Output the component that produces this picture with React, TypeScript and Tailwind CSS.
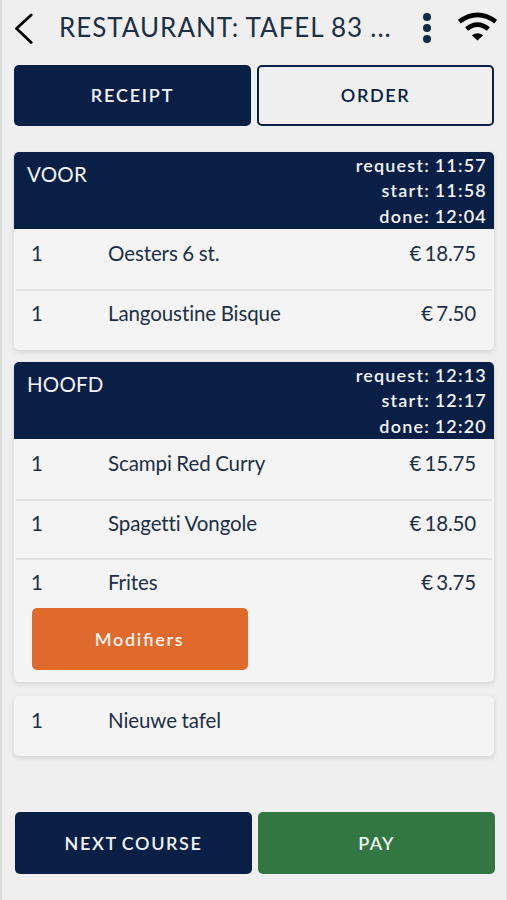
import { clsx } from "clsx";

interface OrderLine {
  qty: number;
  name: string;
  price?: string;
  modifiers?: boolean;
}

interface Course {
  title?: string;
  times?: string[];
  lines: OrderLine[];
}

const courses: Course[] = [
  {
    title: "VOOR",
    times: ["request: 11:57", "start: 11:58", "done: 12:04"],
    lines: [
      { qty: 1, name: "Oesters 6 st.", price: "€ 18.75" },
      { qty: 1, name: "Langoustine Bisque", price: "€ 7.50" },
    ],
  },
  {
    title: "HOOFD",
    times: ["request: 12:13", "start: 12:17", "done: 12:20"],
    lines: [
      { qty: 1, name: "Scampi Red Curry", price: "€ 15.75" },
      { qty: 1, name: "Spagetti Vongole", price: "€ 18.50" },
      { qty: 1, name: "Frites", price: "€ 3.75", modifiers: true },
    ],
  },
  {
    lines: [{ qty: 1, name: "Nieuwe tafel" }],
  },
];

function Button({ label, className }: { label: string; className: string }) {
  return (
    <button
      className={clsx(
        "flex items-center justify-center rounded-[5px] pb-px text-lg font-semibold",
        className
      )}
    >
      {label}
    </button>
  );
}

function Header() {
  return (
    <header className="flex h-[55px] items-center">
      <svg width="20" height="32" viewBox="0 0 20 32" fill="none" className="shrink-0">
        <path
          d="M17.2 2.9 2.5 16.6 17.2 30.4"
          stroke="#000"
          strokeWidth="2.8"
          strokeLinecap="round"
          strokeLinejoin="round"
        />
      </svg>
      <h1 className="ml-[25px] w-[340px] shrink-0 whitespace-nowrap text-[26px] leading-[55px] tracking-[0.98px] [word-spacing:-0.5px]">
        RESTAURANT: TAFEL 83 ...
      </h1>
      <svg width="8" height="32" viewBox="0 0 8 32" className="ml-[24px] shrink-0" fill="#0e2a47">
        <circle cx="4" cy="5" r="4" />
        <circle cx="4" cy="16" r="4" />
        <circle cx="4" cy="27" r="4" />
      </svg>
      <svg width="42" height="32" viewBox="0 0 42 32" className="ml-[26px] shrink-0" fill="none">
        <path d="M2.3 9.6Q20.5 -4 38.7 9.6" stroke="#000" strokeWidth="4.6" />
        <path d="M9.6 17Q20.5 8.2 31.4 17" stroke="#000" strokeWidth="4.6" />
        <path d="M14.9 23.2Q20.5 19.4 26.1 23.2L20.5 28.6Z" fill="#000" />
      </svg>
    </header>
  );
}

function CourseCard({ course }: { course: Course }) {
  const last = course.lines.length - 1;

  return (
    <section className="overflow-hidden rounded-[5px] bg-[#f4f4f4] shadow-[0_2px_5px_rgba(0,0,0,0.13)]">
      {course.title && (
        <div className="flex h-[77px] justify-between bg-[#0a1f45] pl-[13px] pr-[7px] text-[#f1f3f8]">
          <h2 className="mt-[8px] text-[20.5px] leading-[28px] tracking-[0.2px]">{course.title}</h2>
          <div className="pt-[0.5px] text-right text-lg font-semibold leading-[25.5px] tracking-[1.2px] [word-spacing:-1px]">
            {course.times?.map((time) => (
              <p key={time}>{time}</p>
            ))}
          </div>
        </div>
      )}
      {course.lines.map((line, i) => (
        <div
          key={line.name}
          className={clsx("mx-[2px]", i > 0 && "border-t-2 border-[#e2e2e2]")}
        >
          <div
            className={clsx(
              "flex pl-[15px] pr-[16px] text-[20.5px] leading-[24px] tracking-[-0.1px]",
              i === 0 ? "pt-[12px]" : "pt-[10px]",
              line.modifiers ? "h-[48px]" : i === 0 ? "h-[60px]" : i === last ? "h-[59px]" : "h-[57px]"
            )}
          >
            <span className="w-[77px]">{line.qty}</span>
            <span className="flex-1 [word-spacing:-0.5px]">{line.name}</span>
            <span className="tracking-[-0.2px] [word-spacing:-1.7px]">{line.price}</span>
          </div>
          {line.modifiers && (
            <Button
              label="Modifiers"
              className="mb-[12px] ml-[15.5px] h-[62px] w-[216px] bg-[#e06a2c] tracking-[1.7px] text-[#fdf3ec] [font-feature-settings:'liga']"
            />
          )}
        </div>
      ))}
    </section>
  );
}

export default function App() {
  return (
    <div className="h-[900px] w-[507px] overflow-hidden border-l-2 border-r border-[#dcdcdc] bg-[#efefef] px-[12px] font-['Lato',sans-serif] text-[#1c3046]">
      <Header />
      <div className="mt-[10px] grid grid-cols-2 gap-[6px]">
        <Button
          label="RECEIPT"
          className="h-[61px] bg-[#0a1f45] tracking-[1.8px] text-[#f1f3f8]"
        />
        <Button
          label="ORDER"
          className="h-[61px] border-2 border-[#0a1f45] tracking-[1.6px] text-[#0a1f45]"
        />
      </div>
      <main className="mt-[26px] flex flex-col gap-[12px]">
        {courses.map((course, i) => (
          <div key={i} className="last:mt-[2px]">
            <CourseCard course={course} />
          </div>
        ))}
      </main>
      <footer className="-mr-px ml-px mt-[56px] grid grid-cols-2 gap-[6px]">
        <Button
          label="NEXT COURSE"
          className="h-[62px] bg-[#0a1f45] tracking-[1.6px] text-[#f1f3f8] [word-spacing:-1.5px]"
        />
        <Button
          label="PAY"
          className="h-[62px] bg-[#327641] tracking-[1.3px] text-[#f1f8f2]"
        />
      </footer>
    </div>
  );
}
